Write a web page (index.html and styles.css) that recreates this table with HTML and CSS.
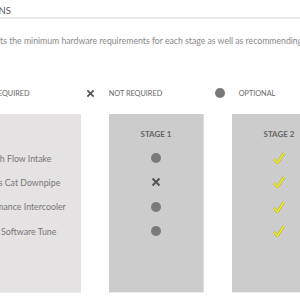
FILE: index.html
```html
<!DOCTYPE html>
<html lang="en">
<head>
  <meta charset="UTF-8" />
  <meta name="viewport" content="width=device-width, initial-scale=1.0" />
  <title>Stage Options</title>
  <link rel="stylesheet" href="styles.css">
</head>
<body>
  <div class="page">
    <h2 class="title"><span class="title-text">STAGE OPTIONS</span></h2>
    <p class="intro">This table lists the minimum hardware requirements for each stage as well as recommending optional upgrades.</p>

    <div class="legend">
      <div class="legend-item">
        <svg class="icon" viewBox="0 0 12 12"><path class="tick-edge" d="M1 7 L4.5 11 L11 1" /><path class="tick" d="M1 7 L4.5 11 L11 1" /></svg>
        <span>REQUIRED</span>
      </div>
      <div class="legend-item">
        <svg class="icon" viewBox="0 0 10 10"><path class="cross" d="M1.5 1.5 L8.5 8.5 M8.5 1.5 L1.5 8.5" /></svg>
        <span>NOT REQUIRED</span>
      </div>
      <div class="legend-item">
        <span class="dot"></span>
        <span>OPTIONAL</span>
      </div>
    </div>

    <div class="stages">
      <div class="col labels">
        <div class="col-head"></div>
        <div class="row">High Flow Intake</div>
        <div class="row">Sports Cat Downpipe</div>
        <div class="row">Performance Intercooler</div>
        <div class="row">ECU Software Tune</div>
      </div>
      <div class="col stage">
        <div class="col-head">STAGE 1</div>
        <div class="row"><span class="dot"></span></div>
        <div class="row"><svg class="icon" viewBox="0 0 10 10"><path class="cross" d="M1.5 1.5 L8.5 8.5 M8.5 1.5 L1.5 8.5" /></svg></div>
        <div class="row"><span class="dot"></span></div>
        <div class="row"><span class="dot"></span></div>
      </div>
      <div class="col stage">
        <div class="col-head">STAGE 2</div>
        <div class="row"><svg class="check" viewBox="0 0 12 12"><path class="tick-edge" d="M1 7 L4.5 11 L11 1" /><path class="tick" d="M1 7 L4.5 11 L11 1" /></svg></div>
        <div class="row"><svg class="check" viewBox="0 0 12 12"><path class="tick-edge" d="M1 7 L4.5 11 L11 1" /><path class="tick" d="M1 7 L4.5 11 L11 1" /></svg></div>
        <div class="row"><svg class="check" viewBox="0 0 12 12"><path class="tick-edge" d="M1 7 L4.5 11 L11 1" /><path class="tick" d="M1 7 L4.5 11 L11 1" /></svg></div>
        <div class="row"><svg class="check" viewBox="0 0 12 12"><path class="tick-edge" d="M1 7 L4.5 11 L11 1" /><path class="tick" d="M1 7 L4.5 11 L11 1" /></svg></div>
      </div>
    </div>
  </div>
</body>
</html>
```

FILE: styles.css
```css
body {
  margin: 0;
  background: #fff;
  font-family: 'Lato', 'Liberation Sans', sans-serif;
  color: #777;
  overflow: hidden;
}
.page {
  margin-left: -55px;
  width: 460px;
}
.title {
  margin: 0;
  padding-top: 4px;
  height: 13px;
  font-size: 9.5px;
  font-weight: normal;
  line-height: 13px;
  white-space: nowrap;
  color: #555;
  border-bottom: 2px solid #ebebeb;
}
.title-text {
  margin-left: -7px;
}
.intro {
  margin: 16px 0 0 8px;
  font-size: 8.7px;
  line-height: 12px;
  white-space: nowrap;
  color: #888;
}
.legend {
  display: grid;
  grid-template-columns: 124px 124px 118px;
  justify-items: center;
  align-items: center;
  margin-top: 39px;
  margin-left: -7px;
  height: 14px;
}
.legend-item {
  display: flex;
  align-items: center;
  gap: 14px;
  font-size: 7.3px;
  color: #666;
}
.icon {
  width: 9px;
  height: 9px;
}
.cross {
  fill: none;
  stroke: #555;
  stroke-width: 2;
}
.tick-edge {
  fill: none;
  stroke: #a8a838;
  stroke-width: 2.4;
}
.tick {
  fill: none;
  stroke: #f2f21c;
  stroke-width: 1.4;
}
.dot {
  display: inline-block;
  width: 10px;
  height: 10px;
  border-radius: 50%;
  background: #7a7a7a;
}
.stages {
  display: grid;
  grid-template-columns: 120px 95px 95px;
  column-gap: 28px;
  margin-top: 14px;
  margin-left: 16px;
}
.col {
  height: 164px;
  padding-top: 14px;
  border-bottom: 1px solid #ececec;
}
.labels {
  padding-right: 4px;
  background: #e4e2e3;
}
.stage {
  background: #cccccc;
  border-right: 1px solid #dcdcdc;
}
.col-head {
  height: 12px;
  margin-bottom: 6px;
  line-height: 12px;
  text-align: center;
  font-size: 8px;
  font-weight: bold;
  color: #666;
}
.row {
  display: flex;
  align-items: center;
  justify-content: center;
  height: 24.3px;
  font-size: 8px;
  white-space: nowrap;
}
.labels .row {
  font-size: 8.8px;
}
.row .icon {
  width: 10px;
  height: 10px;
}
.check {
  width: 12px;
  height: 12px;
}
```
